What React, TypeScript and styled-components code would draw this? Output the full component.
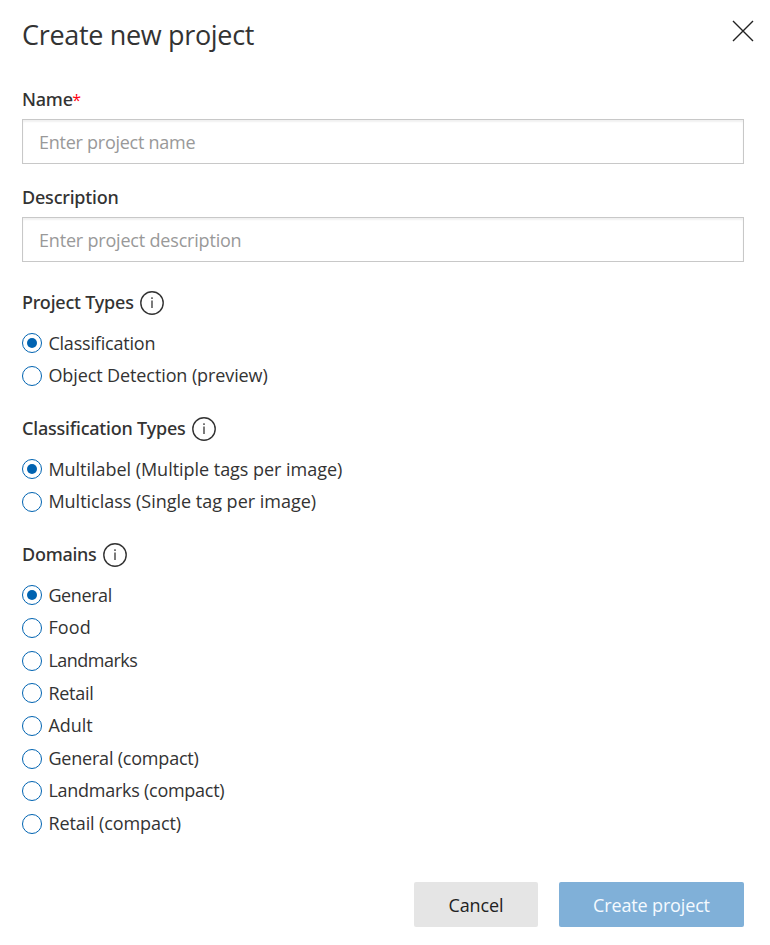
import React, { useState } from "react";
import styled, { createGlobalStyle, css } from "styled-components";

const GlobalStyle = createGlobalStyle`
  *, *::before, *::after { box-sizing: border-box; }
  body {
    margin: 0;
    background: #fff;
    color: #333;
    font-family: "Open Sans", "Noto Sans", sans-serif;
    font-size: 18px;
  }
`;

const Dialog = styled.form`
  display: flex;
  flex-direction: column;
  width: 770px;
  height: 945px;
  padding: 15px 26px 18px 22px;
  overflow: hidden;
`;

const Header = styled.header`
  display: flex;
  justify-content: space-between;
  height: 70px;
`;

const Title = styled.h1`
  margin: 0;
  font-size: 27px;
  font-weight: 400;
  line-height: 40px;
  letter-spacing: -0.33px;
`;

const CloseButton = styled.button`
  width: 22px;
  height: 22px;
  margin: 5px -10px 0 0;
  padding: 0;
  border: 0;
  background: none;
  color: #222;

  svg {
    display: block;
  }
`;

const labelText = css<{ $tracking?: number }>`
  font-family: "Noto Sans", "Open Sans", sans-serif;
  font-size: 18px;
  font-weight: 500;
  line-height: 24px;
  letter-spacing: ${({ $tracking = -0.2 }) => $tracking}px;
  white-space: nowrap;
`;

const Field = styled.div`
  display: flex;
  flex-direction: column;
  gap: 7px;
  height: 98px;
  padding-top: 2px;
`;

const FieldLabel = styled.label`
  ${labelText}
  height: 25px;
`;

const Required = styled.span`
  color: #ff0010;
  font-family: "Open Sans", sans-serif;
  font-weight: 400;
  font-size: 16px;
  margin-left: -0.5px;
`;

const TextInput = styled.input<{ $tracking: number }>`
  width: 100%;
  height: 45px;
  padding: 1px 15px 0 16px;
  border: 1px solid #c8c8c8;
  border-radius: 0;
  outline: none;
  box-shadow: inset 0 2px 2px rgba(0, 0, 0, 0.06);
  color: #333;
  font: inherit;
  letter-spacing: ${({ $tracking }) => $tracking}px;

  &::placeholder {
    color: #999;
    opacity: 1;
  }
`;

const Groups = styled.div`
  display: flex;
  flex-direction: column;
  gap: 23.7px;
  padding-top: 9px;
`;

const Group = styled.section`
  display: flex;
  flex-direction: column;
  gap: 13.1px;
`;

const GroupHeading = styled.div`
  display: flex;
  align-items: center;
  gap: 6.5px;
  height: 24px;

  svg {
    flex: none;
    margin-top: 1px;
  }
`;

const GroupTitle = styled.h2<{ $tracking?: number }>`
  ${labelText}
  margin: 0;
`;

const Options = styled.div`
  display: flex;
  flex-direction: column;
`;

const Option = styled.label<{ $tracking: number }>`
  display: flex;
  align-items: center;
  gap: 6.4px;
  height: 32.64px;
  letter-spacing: ${({ $tracking }) => $tracking}px;
  white-space: nowrap;
`;

const OptionText = styled.span`
  line-height: 24px;
  margin-top: -1.7px;
`;

const Radio = styled.input`
  appearance: none;
  display: grid;
  place-items: center;
  flex: none;
  width: 20px;
  height: 20px;
  margin: 0;
  border: 1px solid #0063b1;
  border-radius: 50%;
  background: #fff;

  &:checked::before {
    content: "";
    width: 10px;
    height: 10px;
    border-radius: 50%;
    background: #0063b1;
  }
`;

const Footer = styled.footer`
  display: flex;
  justify-content: flex-end;
  gap: 21px;
  margin-top: auto;
`;

const Button = styled.button<{ $primary?: boolean }>`
  width: ${({ $primary }) => ($primary ? 185 : 124)}px;
  height: 45px;
  padding: 1px 0 0;
  border: 0;
  border-radius: 2px;
  background: ${({ $primary }) => ($primary ? "#80b0d8" : "#e5e5e5")};
  color: ${({ $primary }) => ($primary ? "#f5faff" : "#222")};
  font: inherit;
  letter-spacing: ${({ $primary }) => ($primary ? -0.15 : -0.1)}px;
`;

const InfoIcon = () => (
  <svg width="24" height="24" viewBox="0 0 24 24" fill="none" aria-hidden="true">
    <circle cx="12" cy="12" r="11.2" stroke="#333" strokeWidth="1.4" />
    <path d="M12 9.5v7.5" stroke="#333" strokeWidth="1.3" />
    <circle cx="12" cy="7.1" r="0.9" fill="#333" />
  </svg>
);

type Choice = { label: string; tracking: number };

const groups: { title: string; tracking: number; options: Choice[] }[] = [
  {
    title: "Project Types",
    tracking: -0.2,
    options: [
      { label: "Classification", tracking: -0.2 },
      { label: "Object Detection (preview)", tracking: -0.1 },
    ],
  },
  {
    title: "Classification Types",
    tracking: -0.2,
    options: [
      { label: "Multilabel (Multiple tags per image)", tracking: -0.03 },
      { label: "Multiclass (Single tag per image)", tracking: -0.01 },
    ],
  },
  {
    title: "Domains",
    tracking: -0.26,
    options: [
      { label: "General", tracking: -0.4 },
      { label: "Food", tracking: 0.1 },
      { label: "Landmarks", tracking: -0.5 },
      { label: "Retail", tracking: -0.25 },
      { label: "Adult", tracking: 0 },
      { label: "General (compact)", tracking: -0.2 },
      { label: "Landmarks (compact)", tracking: -0.26 },
      { label: "Retail (compact)", tracking: -0.1 },
    ],
  },
];

export default function App() {
  const [selected, setSelected] = useState<Record<string, string>>(
    Object.fromEntries(groups.map((g) => [g.title, g.options[0].label]))
  );

  return (
    <>
      <GlobalStyle />
      <Dialog onSubmit={(e) => e.preventDefault()}>
        <Header>
          <Title>Create new project</Title>
          <CloseButton type="button" aria-label="Close">
            <svg width="22" height="22" viewBox="0 0 22 22" fill="none">
              <path d="M1 1l20 20M21 1L1 21" stroke="currentColor" strokeWidth="1.4" />
            </svg>
          </CloseButton>
        </Header>
        <Field>
          <FieldLabel htmlFor="name">
            Name<Required>*</Required>
          </FieldLabel>
          <TextInput id="name" placeholder="Enter project name" $tracking={-0.26} />
        </Field>
        <Field>
          <FieldLabel htmlFor="description">Description</FieldLabel>
          <TextInput id="description" placeholder="Enter project description" $tracking={-0.19} />
        </Field>
        <Groups>
          {groups.map((group) => (
            <Group key={group.title}>
              <GroupHeading>
                <GroupTitle $tracking={group.tracking}>{group.title}</GroupTitle>
                <InfoIcon />
              </GroupHeading>
              <Options>
                {group.options.map(({ label, tracking }) => (
                  <Option key={label} $tracking={tracking}>
                    <Radio
                      type="radio"
                      name={group.title}
                      checked={selected[group.title] === label}
                      onChange={() => setSelected({ ...selected, [group.title]: label })}
                    />
                    <OptionText>{label}</OptionText>
                  </Option>
                ))}
              </Options>
            </Group>
          ))}
        </Groups>
        <Footer>
          <Button type="button">Cancel</Button>
          <Button type="submit" $primary>
            Create project
          </Button>
        </Footer>
      </Dialog>
    </>
  );
}
